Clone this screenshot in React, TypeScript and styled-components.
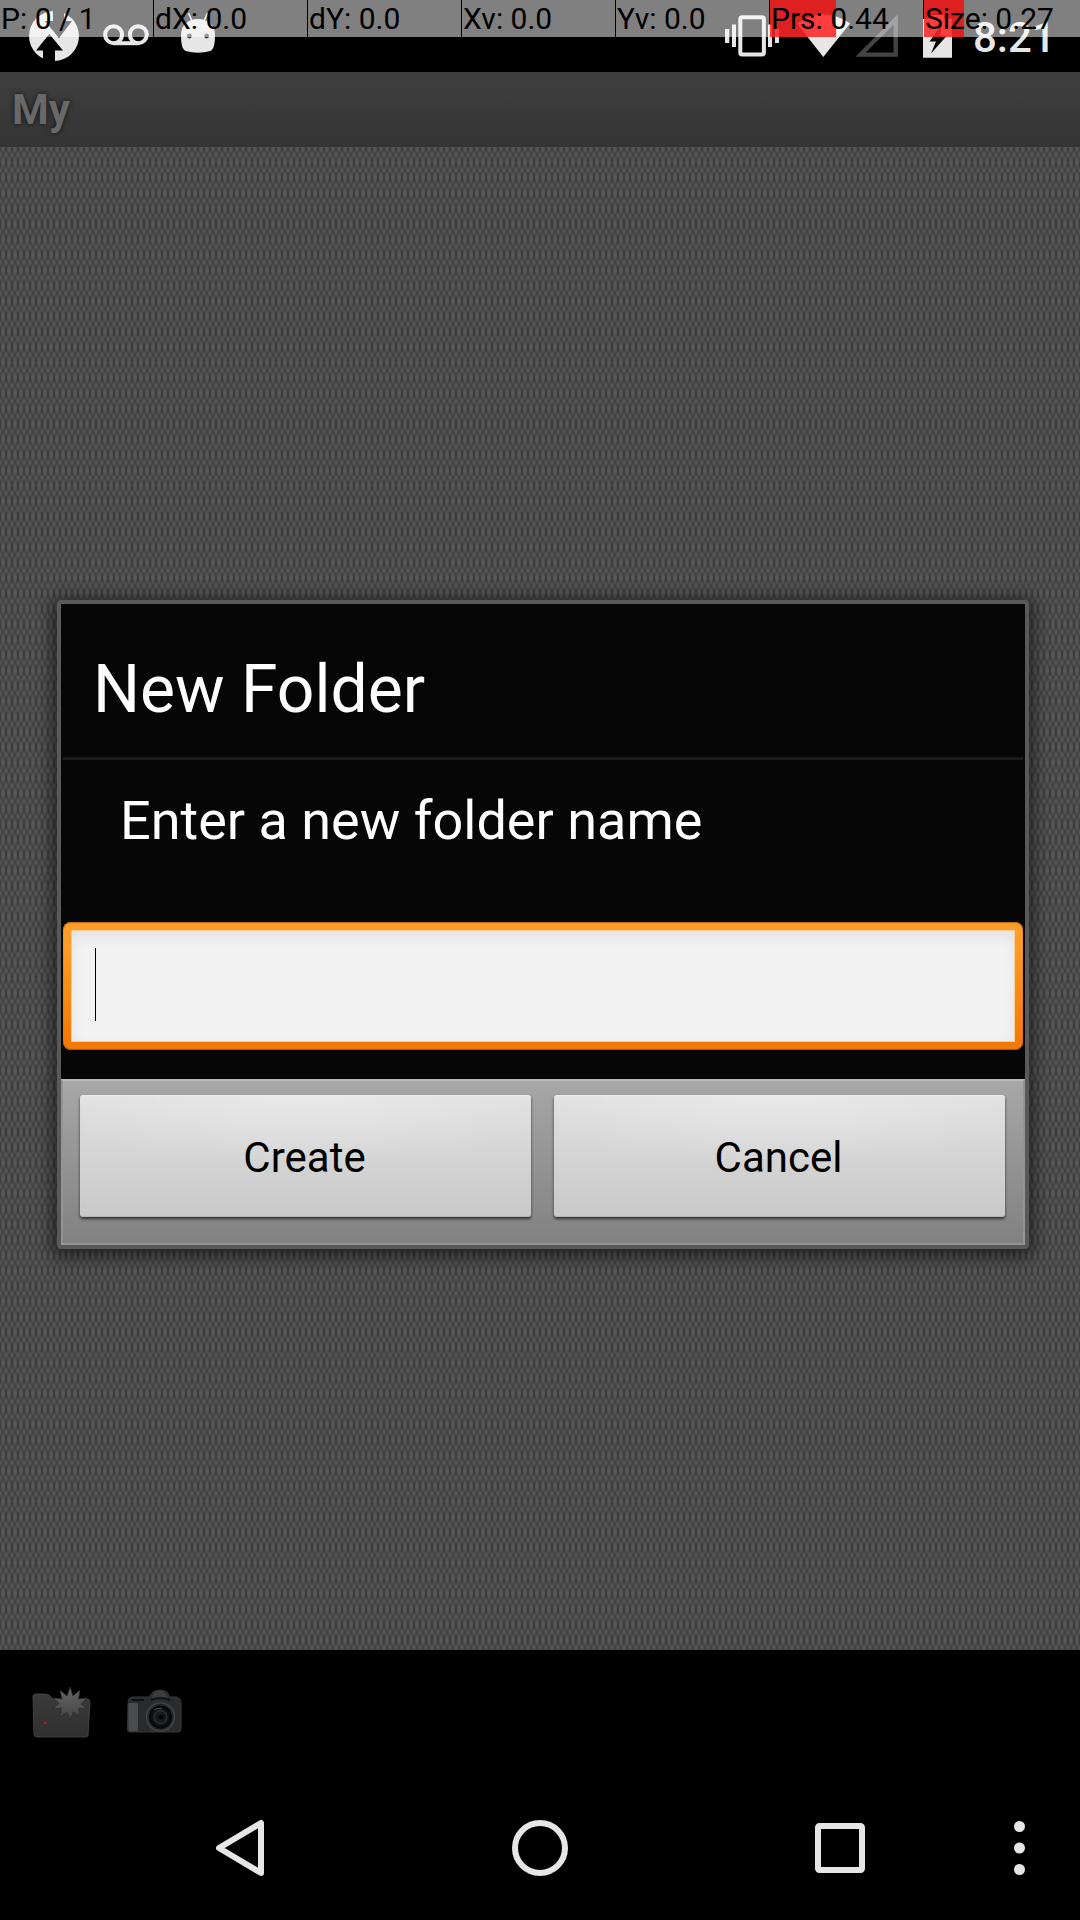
import React from "react";
import styled, { createGlobalStyle } from "styled-components";

const GlobalStyle = createGlobalStyle`
  *, *::before, *::after { box-sizing: border-box; }
  body {
    margin: 0;
    background: #000;
    font-family: Roboto, "Liberation Sans", sans-serif;
  }
`;

const Screen = styled.div`
  position: relative;
  display: flex;
  flex-direction: column;
  width: 1080px;
  height: 1920px;
  overflow: hidden;
  background: #000;
`;

const PointerOverlay = styled.div`
  position: absolute;
  top: 0;
  left: 0;
  z-index: 2;
  display: flex;
  width: 100%;
  height: 37px;
`;

const PointerCell = styled.div<{ $bar?: number }>`
  flex: 0 0 153px;
  margin-right: 1px;
  padding-left: 1px;
  height: 37px;
  font-size: 30px;
  line-height: 37px;
  white-space: pre;
  color: #000;
  background:
    linear-gradient(rgba(255, 0, 0, 0.75), rgba(255, 0, 0, 0.75)) 0 0 / ${(p) => p.$bar ?? 0}px 100% no-repeat,
    rgba(255, 255, 255, 0.5);
  &:last-child { flex: 1; margin-right: 0; }
`;

const StatusBar = styled.div`
  display: flex;
  flex: 0 0 72px;
  justify-content: space-between;
  padding: 0 30px 0 29px;
`;

const IconGroup = styled.div`
  display: flex;
  height: 72px;
  svg { display: block; }
`;

const Clock = styled.span`
  width: 77px;
  margin-left: 20px;
  font-size: 42px;
  font-weight: 500;
  line-height: 49px;
  padding-top: 13px;
  color: #e6e6e6;
  white-space: nowrap;
`;

const TitleBar = styled.header`
  flex: 0 0 75px;
  padding: 1px 12px 0;
  background: linear-gradient(#3f3f3f, #343434);
  color: #686868;
  font-size: 42px;
  font-weight: 700;
  line-height: 74px;
  text-shadow: 0 0 5px rgba(0, 0, 0, 0.7);
`;

const Content = styled.main`
  flex: 0 0 1503px;
  padding: 453px 51px 0 57px;
  background:
    radial-gradient(ellipse 2.5px 7.5px at 50% 50%, rgb(92, 92, 92), rgba(88, 88, 88, 0.75) 60%, transparent) 0 -7.7px / 6px 15.4px,
    radial-gradient(ellipse 2.8px 4.5px at 50% 50%, rgb(94, 94, 94), rgba(88, 88, 88, 0.5) 60%, transparent) 3px 0 / 6px 15.4px,
    #3d3d3d;
`;

const Dialog = styled.section`
  display: flex;
  flex-direction: column;
  height: 649px;
  border: 4px solid #595959;
  border-radius: 4px;
  background: #060606;
  box-shadow: 0 3px 16px 5px rgba(0, 0, 0, 0.5);
`;

const DialogTitle = styled.h1`
  flex: 0 0 156px;
  margin: 0 2px;
  padding: 47px 0 0 30px;
  border-bottom: 3px solid #1b1b1b;
  color: #fff;
  font-size: 66px;
  font-weight: 400;
  line-height: 78px;
`;

const Message = styled.p`
  flex: 0 0 162px;
  margin: 0;
  padding: 29px 57px 0 59px;
  color: #fff;
  font-size: 54px;
  font-weight: 400;
  line-height: 63px;
`;

const InputFrame = styled.div`
  flex: 0 0 128px;
  margin: 0 2px 29px 2px;
  padding: 8px;
  border-radius: 8px;
  background: linear-gradient(#fd9c27 20%, #f37a05 92%);
  box-shadow: inset 0 -1px 1px #a95502, inset 0 1px 1px #b66b18;
`;

const InputWell = styled.div`
  display: flex;
  height: 112px;
  padding: 17px 23px;
  background: #f2f2f2;
  border: 1px solid #f6cf9c;
  box-shadow: inset 0 7px 14px rgba(0, 0, 0, 0.05), inset 0 0 12px rgba(0, 0, 0, 0.02);
`;

const Caret = styled.span`
  width: 1px;
  height: 73px;
  background: #000;
`;

const ButtonPanel = styled.div`
  display: flex;
  flex: 1;
  gap: 23px;
  padding: 14px 18px 26px 17px;
  border: 2px solid #949494;
  border-top-color: #b9b9b9;
  background: linear-gradient(#a7a7a7, #818181);
`;

const DialogButton = styled.button`
  flex: 1;
  height: 122px;
  padding: 3px 2px 0 0;
  border: 0;
  border-radius: 3px;
  color: #000;
  font: 400 42px Roboto, "Liberation Sans", sans-serif;
  background:
    radial-gradient(ellipse 60% 60% at 50% 0, rgba(255, 255, 255, 0.32), transparent),
    linear-gradient(#e0e0e0, #c9c9c9);
  box-shadow: 0 2px 3px rgba(0, 0, 0, 0.65), inset 0 1px 1px #eee, inset 0 -1px 1px #b3b3b3;
`;

const Toolbar = styled.div`
  display: flex;
  flex: 0 0 126px;
  gap: 33px;
  padding: 36px 30px 0;
`;

const NavBar = styled.nav`
  display: flex;
  flex: 0 0 144px;
  padding-left: 90px;
`;

const NavButton = styled.button<{ $width: number }>`
  display: flex;
  align-items: center;
  justify-content: center;
  width: ${(p) => p.$width}px;
  padding: 0;
  border: 0;
  background: none;
`;

const readings = [
  { text: "P: 0 / 1" },
  { text: "dX: 0.0" },
  { text: "dY: 0.0" },
  { text: "Xv: 0.0" },
  { text: "Yv: 0.0" },
  { text: "Prs: 0.44", bar: 66 },
  { text: "Size: 0.27", bar: 40 },
];

const NotificationIcons = () => (
  <IconGroup>
    <svg width="74" height="72" viewBox="29 0 74 72">
      <circle cx="54" cy="36" r="25" fill="#e6e6e6" />
      <path d="M49.3 34 63 50.5H55V62H43V50.5H36Z M53 10H64V21H72L59 38 45 21H53Z" fill="#000" />
    </svg>
    <svg width="77" height="72" viewBox="103 0 77 72" fill="none" stroke="#e6e6e6" strokeWidth="4">
      <circle cx="113.6" cy="34.7" r="8.5" />
      <circle cx="138.3" cy="34.7" r="8.5" />
      <path d="M113.6 43.2H138.3" />
    </svg>
    <svg width="36" height="72" viewBox="180 0 36 72">
      <path d="M188.5 13 192 21M207.5 13 204 21" stroke="#e6e6e6" strokeWidth="1.6" />
      <path d="M181 35C181 26 187 19 198 19S215 26 215 35C215 43 214 49 210.5 51Q198 54.5 185.5 51C182 49 181 43 181 35Z" fill="#e6e6e6" />
      <circle cx="189.4" cy="36" r="2.4" fill="#333" />
      <circle cx="206.6" cy="36" r="2.4" fill="#333" />
    </svg>
  </IconGroup>
);

const SystemIcons = () => (
  <IconGroup>
    <svg width="72" height="72" viewBox="725 0 72 72" fill="#e6e6e6">
      <rect x="740.3" y="17.3" width="23.6" height="37.2" rx="2" fill="none" stroke="#e6e6e6" strokeWidth="4" />
      <path d="M725 29h4.3v14H725zM732 24.5h4v22.5h-4zM768 24.5h4v22.5h-4zM775 29h4v14h-4z" />
    </svg>
    <svg width="58" height="72" viewBox="797 0 58 72">
      <path d="M823.3 57 797 23.5Q809 14.5 823.3 14.5T850 23.5Z" fill="#e6e6e6" />
    </svg>
    <svg width="68" height="72" viewBox="855 0 68 72">
      <path d="M860.5 54.7H895.7V19.5Z" fill="none" stroke="#444" strokeWidth="4.3" />
    </svg>
    <svg width="30" height="72" viewBox="923 0 30 72">
      <path d="M923 19h8v-4h13v4h8v38.7H923Z" fill="#e6e6e6" />
      <path d="M942 25 929.5 41.5H936L931 53.5 947 35.5H940Z" fill="#000" />
    </svg>
    <Clock>8:21</Clock>
  </IconGroup>
);

const FolderIcon = () => (
  <svg width="64" height="56" viewBox="30 1686 64 56">
    <defs>
      <linearGradient id="folder" x1="0" y1="0" x2="0" y2="1">
        <stop offset="0" stopColor="#3a3a3a" />
        <stop offset="1" stopColor="#303030" />
      </linearGradient>
      <linearGradient id="burst" x1="0" y1="0" x2="0" y2="1">
        <stop offset="0" stopColor="#666" />
        <stop offset="1" stopColor="#444" />
      </linearGradient>
    </defs>
    <path d="M33 1696Q33 1694 36 1694H45Q49 1694 52 1698L54 1699H87Q90 1699 90 1702L88 1735Q88 1737 85 1737H37Q34 1737 34 1734Z" fill="url(#folder)" stroke="#414141" />
    <path d="M70 1687 73 1696 80 1690 78.5 1699 87 1698 81 1704 87 1709 79 1708 79 1716 73.5 1712 70 1720 67 1712 60 1717 61.5 1708 53 1709 59 1703.5 53.5 1698 62 1699 60 1690 67 1696Z" fill="url(#burst)" stroke="#292929" strokeWidth=".7" />
    <rect x="44" y="1722" width="2" height="2" fill="#f00" />
  </svg>
);

const CameraIcon = () => (
  <svg width="56" height="56" viewBox="127 1686 56 56">
    <path d="M128 1703Q128 1697 133 1697H149L153 1692Q160 1688 167 1692L170 1697H177Q181 1698 181 1703V1729Q181 1732 178 1732H130Q127.5 1732 127.5 1729Z" fill="#292b2d" stroke="#36383a" />
    <path d="M128.5 1703H138V1731H130Q128.5 1731 128.5 1729Z" fill="#4a4b4d" />
    <path d="M152 1698Q154 1690 160 1690.5T168 1698Z" fill="#3b3e40" />
    <path d="M151 1700Q160 1696 170 1700M132 1700H144" stroke="#111" fill="none" strokeWidth="2" />
    <circle cx="160.5" cy="1717" r="14" fill="#252729" stroke="#414345" strokeWidth="1.5" />
    <circle cx="160.5" cy="1717" r="10.5" fill="#101112" stroke="#070707" strokeWidth="2" />
    <circle cx="160.5" cy="1717" r="6.5" fill="#18191a" stroke="#303132" strokeWidth="1.3" />
    <circle cx="161" cy="1717" r="2.5" fill="#050505" />
    <path d="M154 1710Q158 1707 162 1709" stroke="#4b4d4f" fill="none" />
  </svg>
);

export default function App() {
  return (
    <Screen>
      <GlobalStyle />
      <PointerOverlay>
        {readings.map((r) => (
          <PointerCell key={r.text} $bar={r.bar}>{r.text}</PointerCell>
        ))}
      </PointerOverlay>
      <StatusBar>
        <NotificationIcons />
        <SystemIcons />
      </StatusBar>
      <TitleBar>My</TitleBar>
      <Content>
        <Dialog>
          <DialogTitle>New Folder</DialogTitle>
          <Message>Enter a new folder name</Message>
          <InputFrame>
            <InputWell>
              <Caret />
            </InputWell>
          </InputFrame>
          <ButtonPanel>
            <DialogButton>Create</DialogButton>
            <DialogButton>Cancel</DialogButton>
          </ButtonPanel>
        </Dialog>
      </Content>
      <Toolbar>
        <FolderIcon />
        <CameraIcon />
      </Toolbar>
      <NavBar>
        <NavButton $width={300} aria-label="Back">
          <svg width="60" height="60" viewBox="210 1818 60 60">
            <path d="M219 1848 261 1823V1873Z" fill="none" stroke="#e6e6e6" strokeWidth="6" strokeLinejoin="round" />
          </svg>
        </NavButton>
        <NavButton $width={300} aria-label="Home">
          <svg width="60" height="60">
            <circle cx="30" cy="30" r="25" fill="none" stroke="#e6e6e6" strokeWidth="6" />
          </svg>
        </NavButton>
        <NavButton $width={300} aria-label="Recents">
          <svg width="60" height="60">
            <rect x="8" y="8" width="44" height="44" rx="1.5" fill="none" stroke="#e6e6e6" strokeWidth="6" />
          </svg>
        </NavButton>
        <NavButton $width={59} aria-label="Menu">
          <svg width="11" height="60" fill="#e6e6e6">
            <circle cx="5.5" cy="8.5" r="5.5" />
            <circle cx="5.5" cy="30" r="5.5" />
            <circle cx="5.5" cy="51.5" r="5.5" />
          </svg>
        </NavButton>
      </NavBar>
    </Screen>
  );
}
